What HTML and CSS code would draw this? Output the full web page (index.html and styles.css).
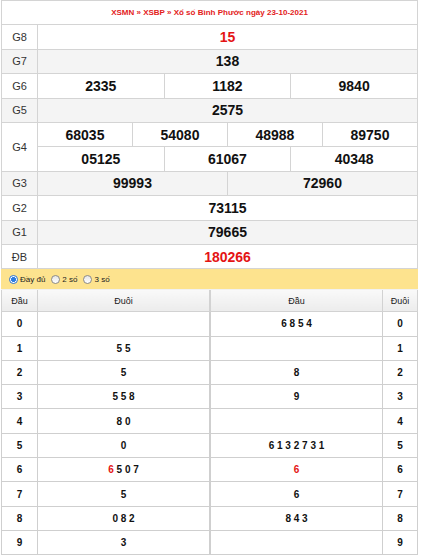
FILE: index.html
```html
<!DOCTYPE html>
<html>
<head>
<meta charset="utf-8">
<link rel="stylesheet" href="styles.css">
</head>
<body>
<div class="wrap">
  <table class="kq">
    <colgroup>
      <col class="c-label">
      <col><col><col><col><col><col><col><col><col><col><col><col>
    </colgroup>
    <tr class="title-row"><td colspan="13" class="title">XSMN » XSBP » Xổ số Bình Phước ngày 23-10-2021</td></tr>
    <tr><td class="lb">G8</td><td colspan="12" class="num red">15</td></tr>
    <tr class="alt"><td class="lb">G7</td><td colspan="12" class="num">138</td></tr>
    <tr><td class="lb">G6</td><td colspan="4" class="num">2335</td><td colspan="4" class="num">1182</td><td colspan="4" class="num">9840</td></tr>
    <tr class="alt"><td class="lb">G5</td><td colspan="12" class="num">2575</td></tr>
    <tr><td class="lb" rowspan="2">G4</td><td colspan="3" class="num">68035</td><td colspan="3" class="num">54080</td><td colspan="3" class="num">48988</td><td colspan="3" class="num">89750</td></tr>
    <tr><td colspan="4" class="num">05125</td><td colspan="4" class="num">61067</td><td colspan="4" class="num">40348</td></tr>
    <tr class="alt"><td class="lb">G3</td><td colspan="6" class="num">99993</td><td colspan="6" class="num">72960</td></tr>
    <tr><td class="lb">G2</td><td colspan="12" class="num">73115</td></tr>
    <tr class="alt"><td class="lb">G1</td><td colspan="12" class="num">79665</td></tr>
    <tr><td class="lb">ĐB</td><td colspan="12" class="num red">180266</td></tr>
  </table>
  <div class="opts">
    <label class="opt"><span class="radio on"></span>Đầy đủ</label>
    <label class="opt"><span class="radio"></span>2 số</label>
    <label class="opt"><span class="radio"></span>3 số</label>
  </div>
  <div class="lt">
    <table class="lto left">
      <colgroup><col class="c-d"><col></colgroup>
      <tr class="hd"><th>Đầu</th><th>Đuôi</th></tr>
      <tr><td>0</td><td></td></tr>
      <tr><td>1</td><td>5 5</td></tr>
      <tr><td>2</td><td>5</td></tr>
      <tr><td>3</td><td>5 5 8</td></tr>
      <tr><td>4</td><td>8 0</td></tr>
      <tr><td>5</td><td>0</td></tr>
      <tr><td>6</td><td><span class="red">6</span> 5 0 7</td></tr>
      <tr><td>7</td><td>5</td></tr>
      <tr><td>8</td><td>0 8 2</td></tr>
      <tr><td>9</td><td>3</td></tr>
    </table>
    <table class="lto right">
      <colgroup><col><col class="c-d2"></colgroup>
      <tr class="hd"><th>Đầu</th><th>Đuôi</th></tr>
      <tr><td>6 8 5 4</td><td>0</td></tr>
      <tr><td></td><td>1</td></tr>
      <tr><td>8</td><td>2</td></tr>
      <tr><td>9</td><td>3</td></tr>
      <tr><td></td><td>4</td></tr>
      <tr><td>6 1 3 2 7 3 1</td><td>5</td></tr>
      <tr><td><span class="red">6</span></td><td>6</td></tr>
      <tr><td>6</td><td>7</td></tr>
      <tr><td>8 4 3</td><td>8</td></tr>
      <tr><td></td><td>9</td></tr>
    </table>
  </div>
</div>
</body>
</html>
```
FILE: styles.css
```css
html, body {
  margin: 0;
  padding: 0;
  background: #fff;
  font-family: "Liberation Sans", Arial, sans-serif;
  color: #000;
}
.wrap {
  width: 417px;
  margin-left: 1px;
}
.kq {
  width: 417px;
  border-collapse: collapse;
  table-layout: fixed;
}
.kq col.c-label {
  width: 36px;
}
.kq td {
  border: 1px solid #d4d4d4;
  padding: 0;
  height: 23.4px;
  text-align: center;
  vertical-align: middle;
}
.kq .title {
  color: #e31b1b;
  font-size: 8px;
  font-weight: bold;
}
.kq .alt td {
  background: #f4f4f4;
}
.kq .lb {
  font-size: 11px;
  color: #333;
}
.kq .num {
  font-size: 14px;
  font-weight: bold;
  color: #111;
}
.kq .num.red {
  color: #e41414;
}
.opts {
  height: 20px;
  background: #fde38e;
  display: flex;
  align-items: center;
  padding-left: 8px;
  gap: 6px;
  border-bottom: 1px solid #f1f1f1;
}
.opt {
  display: flex;
  align-items: center;
  font-size: 8px;
  color: #222;
  gap: 2px;
}
.radio {
  width: 7px;
  height: 7px;
  border-radius: 50%;
  border: 1px solid #8a8a8a;
  background: linear-gradient(#e6e6e6, #fff);
  box-sizing: content-box;
}
.radio.on {
  border-color: #2a72d5;
  background: radial-gradient(circle, #2d7be0 0 2.2px, #fff 2.8px);
}
.lt {
  display: flex;
}
.lto {
  border-collapse: collapse;
  table-layout: fixed;
}
.lto.left {
  width: 209px;
}
.lto.right {
  width: 208px;
}
.lto col.c-d {
  width: 36px;
}
.lto col.c-d2 {
  width: 35px;
}
.lto th {
  height: 21px;
  font-size: 9px;
  font-weight: normal;
  color: #1a1a1a;
  background: linear-gradient(#f9f9f9, #ececec);
  padding: 0;
  border: 1px solid #d2d2d2;
  border-top: none;
  text-align: center;
}
.lto td {
  height: 23.3px;
  padding: 0;
  border: 1px solid #cfcfcf;
  text-align: center;
  font-size: 10px;
  font-weight: bold;
  color: #111;
}
.red {
  color: #e41414;
}
```
